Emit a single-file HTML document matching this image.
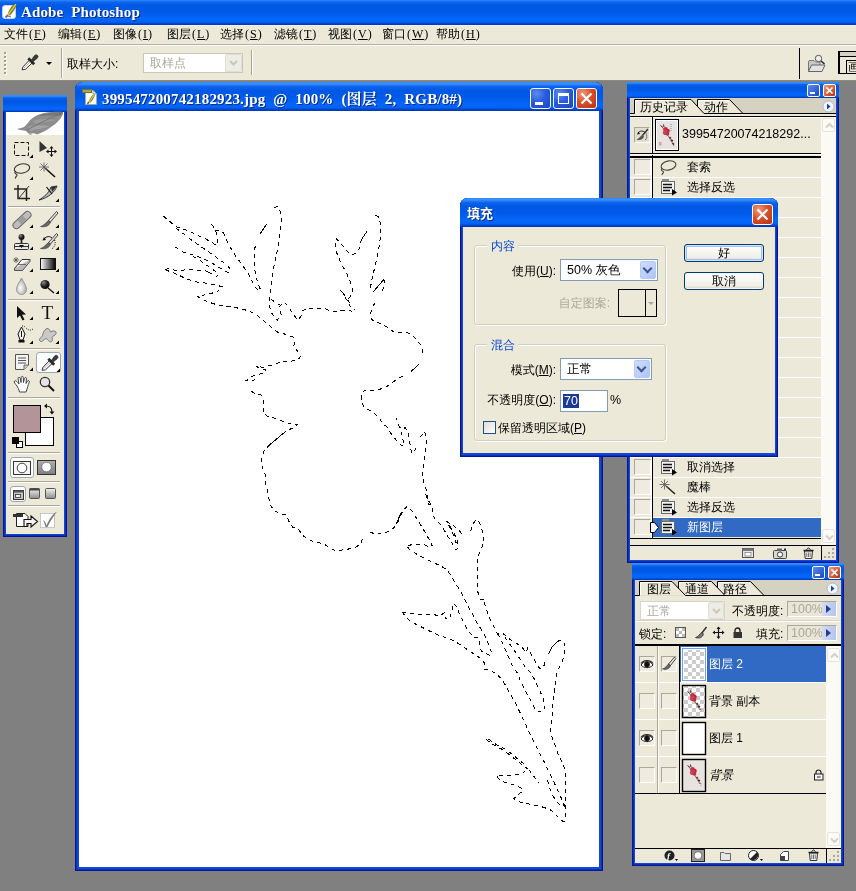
<!DOCTYPE html>
<html lang="zh-CN">
<head>
<meta charset="utf-8">
<title>Adobe Photoshop</title>
<style>
*{box-sizing:border-box;margin:0;padding:0}
html,body{width:856px;height:891px;overflow:hidden;background:#808080}
body{position:relative;will-change:transform;font-family:"Liberation Sans","WenQuanYi Zen Hei","Noto Sans CJK SC",sans-serif;font-size:12px;color:#000;line-height:1}
.abs{position:absolute}
.mono{font-family:"Liberation Mono","WenQuanYi Zen Hei","Noto Sans CJK SC",monospace}
/* app title bar */
#apptitle{left:0;top:0;width:856px;height:25px;background:linear-gradient(#2c88fc 0,#0c64ee 9%,#0058e4 22%,#005ae8 50%,#0466fa 74%,#0462f4 88%,#0040c4 96%,#0034a8 100%)}
#apptitle .t{left:21px;top:5px;color:#fff;font-weight:bold;font-size:15px;letter-spacing:0.13px;word-spacing:4px;font-family:"Liberation Serif","Noto Serif CJK SC",serif;white-space:pre;text-shadow:1px 1px 0 #0a2a8a}
#menubar{left:0;top:25px;width:856px;height:20px;background:#ece9d8;border-top:1px solid #eef1f6;border-bottom:1px solid #b4b1a0}
#menubar span{position:absolute;top:2px;white-space:pre;font-size:12px}
#menubar i{font-style:normal;font-family:"Liberation Serif",serif;letter-spacing:1px;margin-left:1px}
#menubar u{text-decoration:underline}
#optbar{left:0;top:45px;width:856px;height:36px;background:#ece9d8;border-top:1px solid #fff;border-bottom:1px solid #8c8a7c}
/* xp window */
.win{position:absolute;background:#1646d4;box-shadow:inset 0 0 0 1px #06198c, inset 0 0 0 2px #0a2ec0}
.wtitle{position:absolute;left:0;top:0;right:0;background:linear-gradient(#2c88fc 0,#3a90fc 6%,#0c62ec 16%,#0058e4 30%,#005ae8 52%,#0466fa 76%,#0462f4 88%,#0040c4 96%,#0034a8 100%)}
.pbody{position:absolute;background:#ece9d8}
.wt{color:#fff;font-weight:bold;font-size:15px;letter-spacing:0.17px;word-spacing:4px;font-family:"Liberation Serif","Noto Serif CJK SC",serif;white-space:pre;text-shadow:1px 1px 0 #0a2a8a}
.xb{position:absolute;width:21px;height:21px;border:1px solid #fff;border-radius:3px;background:radial-gradient(circle at 30% 25%,#5a8df0 0,#2a5cdc 45%,#1c44c0 100%)}
.xc{background:radial-gradient(circle at 30% 25%,#f09a7a 0,#d9502c 45%,#b8300f 100%)}
.sb{position:absolute;width:13px;height:13px;border:1px solid #fff;border-radius:2px;background:linear-gradient(135deg,#5a8df0,#1c44c0)}
.hrow{position:absolute;left:0;width:191px;height:20px;border-bottom:1px solid #fff}
.hrow span{position:absolute;left:57px;top:3px;font-size:12px;white-space:pre}
.hbox{position:absolute;left:4px;top:1px;width:17px;height:16px;border:1px solid;border-color:#aca899 #fff #fff #aca899;background:#efecdf}
.hsel{border-bottom:0;height:19px}
.hsel::before{content:"";position:absolute;left:23px;top:0;width:168px;height:19px;background:#316ac5}
.hsel span{color:#fff}
.sbtn{width:13px;height:14px;border:1px solid #e6e4d8;border-radius:2px;background:#fcfbf7}
.lrow{position:absolute;left:0;width:191px;height:37px;border-bottom:1px solid #fff}
.lrow span{position:absolute;left:74px;top:12px;font-size:12px;white-space:pre}
.lbox{position:absolute;top:10px;width:16px;height:16px;border:1px solid;border-color:#aca899 #fff #fff #aca899;background:#efecdf}
.lsel::before{content:"";position:absolute;left:45px;top:0;width:146px;height:36px;background:#316ac5}
.lsel span{color:#fff}
.lfield{position:absolute;width:50px;height:16px;border:1px solid;border-color:#aca899 #fff #fff #aca899;background:#e9e6d8}
.lfield span{position:absolute;left:3px;top:1px;font-size:12.500px;color:#aca899}
.lfield b{position:absolute;right:0;top:0;width:14px;height:14px;background:linear-gradient(90deg,#d4dcf4,#b4c4ee)}
.lfield b::after{content:"";position:absolute;left:4px;top:3px;border:4px solid transparent;border-left:5px solid #23408f;border-right:0}
.grp{position:absolute;border:1px solid #d0d0bf;border-radius:3px;box-shadow:inset 1px 1px 0 #fff, 1px 1px 0 #fff}
.glab{position:absolute;background:#ece9d8;color:#0046d5;font-size:12px;padding:0 3px 0 4px;white-space:pre}
.dl{position:absolute;font-size:12px;white-space:pre}
.combo{position:absolute;height:22px;border:1px solid #7f9db9;background:#fff}
.combo span{position:absolute;left:6px;top:4px;font-size:12.500px;white-space:pre}
.combo b{position:absolute;right:1px;top:1px;width:16px;height:18px;border-radius:2px;background:linear-gradient(135deg,#cfdcfb,#b0c4f4);border:1px solid #b4c8f6}
.combo b::after{content:"";position:absolute;left:3px;top:3px;width:5px;height:5px;border:solid #3a5590;border-width:0 2.500px 2.500px 0;transform:rotate(45deg)}
.btn{position:absolute;width:80px;height:18px;border:1px solid #003c74;border-radius:3px;background:linear-gradient(#fff,#f0efe6 80%,#d6d0c5);font-size:12px;text-align:center;line-height:16px;box-shadow:inset 0 0 0 1px #f4f3ee}
.sc{background:linear-gradient(135deg,#f09a7a,#b8300f)}
</style>
</head>
<body>
<!-- app chrome -->
<div id="apptitle" class="abs">
  <svg class="abs" style="left:2px;top:3px" width="16" height="16" viewBox="0 0 16 16">
    <rect x="0.5" y="2.5" width="13" height="13" rx="2.5" fill="#fff" stroke="#c9d3ea"/>
    <path d="M13.5 1 C10 2 7 6 5.5 12 L8 12.5 C10.5 10 13.5 6 14.5 2 Z" fill="#6b8a2e"/>
    <path d="M13.8 1.2 C12 4 9 8 6 12" stroke="#e9c43a" stroke-width="1.3" fill="none"/>
    <path d="M5.5 12 L4 14.5" stroke="#c0392b" stroke-width="1.5"/>
    <path d="M3 14 q3 -2 6 0" stroke="#3a6fd0" stroke-width="1" fill="none"/>
  </svg>
  <div class="abs t">Adobe Photoshop</div>
</div>
<div id="menubar" class="abs">
<span style="left:4px">文件<i>(<u>F</u>)</i></span><span style="left:58px">编辑<i>(<u>E</u>)</i></span><span style="left:113px">图像<i>(<u>I</u>)</i></span><span style="left:167px">图层<i>(<u>L</u>)</i></span><span style="left:220px">选择<i>(<u>S</u>)</i></span><span style="left:274px">滤镜<i>(<u>T</u>)</i></span><span style="left:328px">视图<i>(<u>V</u>)</i></span><span style="left:382px">窗口<i>(<u>W</u>)</i></span><span style="left:436px">帮助<i>(<u>H</u>)</i></span>
</div>
<div id="optbar" class="abs">
  <div class="abs" style="left:5px;top:7px;width:2px;height:24px;background:repeating-linear-gradient(#fff 0 2px,transparent 2px 4px)"></div>
  <div class="abs" style="left:4px;top:6px;width:2px;height:24px;background:repeating-linear-gradient(#a19e8c 0 2px,transparent 2px 4px)"></div>
  <svg class="abs" style="left:20px;top:7px" width="20" height="20" viewBox="0 0 20 20">
    <path d="M2 16.800 L3 13.800 L9.500 7 L12.300 9.800 L5.500 16.300 Z" fill="#fafafa" stroke="#333" stroke-width="1"/>
    <path d="M4 15 L10 9" stroke="#bbb" stroke-width="1"/>
    <path d="M8.300 5.300 L14.200 11.200" stroke="#2a2a2a" stroke-width="2.800"/>
    <path d="M11 7.500 L14.300 2.800 Q16 0.800 17.500 2.300 Q19 3.800 17 5.500 L12.500 9 Z" fill="#3a3a3a" stroke="#222" stroke-width="0.600"/>
  </svg>
  <div class="abs" style="left:46px;top:16px;width:0;height:0;border:3px solid transparent;border-top:3px solid #000;border-bottom:0"></div>
  <div class="abs" style="left:61px;top:2px;width:1px;height:30px;background:#a8a592"></div>
  <div class="abs" style="left:62px;top:2px;width:1px;height:30px;background:#fff"></div>
  <div class="abs" style="left:67px;top:12px;font-size:12px;white-space:pre">取样大小:</div>
  <div class="abs" style="left:143px;top:7px;width:100px;height:20px;border:1px solid #c9c7ba;background:#fff">
    <div class="abs" style="left:6px;top:3px;color:#aca899;font-size:12px">取样点</div>
    <div class="abs" style="right:0;top:0;width:17px;height:18px;background:#eeede5;border:1px solid #e0dfd4;border-radius:2px"></div>
    <svg class="abs" style="right:4px;top:6px" width="9" height="6" viewBox="0 0 9 6"><path d="M1 1 L4.5 4.5 L8 1" stroke="#c9c7ba" stroke-width="2" fill="none"/></svg>
  </div>
  <div class="abs" style="left:251px;top:4px;width:1px;height:25px;background:#a8a592"></div>
  <div class="abs" style="left:252px;top:4px;width:1px;height:25px;background:#fff"></div>
  <div class="abs" style="left:799px;top:2px;width:1px;height:31px;background:#000"></div>
  <svg class="abs" style="left:807px;top:8px" width="20" height="20" viewBox="0 0 20 20">
    <path d="M1.5 17.5 V8 Q1.5 6.5 3 6.5 H7 L8.5 8 H13 V11" fill="#c9c9c9" stroke="#777" stroke-width="1"/>
    <path d="M1.5 17.5 L4.5 11 H18 L15 17.5 Z" fill="#e3e3e3" stroke="#666" stroke-width="1"/>
    <circle cx="11.5" cy="4.5" r="3.2" fill="#eee" stroke="#555" stroke-width="1"/>
    <path d="M14 7 L17.5 10" stroke="#222" stroke-width="1.6"/>
  </svg>
  <div class="abs" style="left:838px;top:5px;width:20px;height:23px;border:solid #000;border-width:1px 0 1px 2px;background:#ece9d8;overflow:hidden">
    <div class="abs" style="left:0;top:0;width:20px;height:4px;background:#d6d2c2"></div>
    <div class="abs" style="left:0;top:4px;width:20px;height:1px;background:#000"></div>
    <div class="abs" style="left:6px;top:8px;width:14px;height:14px;border:1px solid #000;border-bottom:0;border-right:0"></div>
    <div class="abs" style="left:8px;top:9px;font-size:12px">画</div>
  </div>
</div>

<!-- document window -->
<div class="win" id="doc" style="left:75px;top:82px;width:528px;height:789px;border-radius:8px 8px 0 0">
  <div class="wtitle" style="height:29px;border-radius:8px 8px 0 0"></div>
  <svg class="abs" style="left:7px;top:7px" width="16" height="16" viewBox="0 0 16 16">
    <path d="M3.5 1.5 H11 L14.5 5 V15.5 H3.5 Z" fill="#fff" stroke="#9aa"/>
    <path d="M11 1.5 V5 H14.5" fill="#dde" stroke="#9aa"/>
    <rect x="0.5" y="0.5" width="9" height="3" fill="#a7a74a" stroke="#77772a"/>
    <path d="M12 5 C10 6 8 9 6.5 13 L8.5 13.5 C10.5 11.5 12.5 8.5 13 5.5 Z" fill="#6b8a2e"/>
    <path d="M12.3 5.2 C11 7.5 9 10.5 7 13.5" stroke="#e9c43a" stroke-width="1.1" fill="none"/>
    <path d="M6.8 13 L5.5 15" stroke="#c0392b" stroke-width="1.4"/>
  </svg>
  <div class="abs wt" style="left:27px;top:10px">399547200742182923.jpg @ 100% (图层 2, RGB/8#)</div>
  <div class="xb" style="left:455px;top:6px"><div class="abs" style="left:4px;top:13px;width:8px;height:3px;background:#fff"></div></div>
  <div class="xb" style="left:478px;top:6px"><div class="abs" style="left:4px;top:4px;width:11px;height:11px;border:1px solid #fff;border-top-width:3px"></div></div>
  <div class="xb xc" style="left:501px;top:6px"><svg class="abs" style="left:3px;top:3px" width="13" height="13" viewBox="0 0 13 13"><path d="M1.5 1.5 L11.5 11.5 M11.5 1.5 L1.5 11.5" stroke="#fff" stroke-width="2.2"/></svg></div>
  <div class="abs" style="left:4px;top:29px;width:520px;height:756px;background:#fff" id="canvas"></div>
</div>

<!-- ants -->
<svg class="abs" style="left:0;top:0" width="610" height="880" viewBox="0 0 610 880" shape-rendering="crispEdges" fill="none" stroke="#000" stroke-width="1">
<g stroke-dasharray="4 4">
<polyline points="163.4,216.2 171.8,223.2 177.4,227.4 184.4,229.5 191.5,232.3 198.5,235.8 205.5,238.9 212.5,242.9 216.7,245.4 217.4,241.5 216.7,235.1 215.3,229.5 211.4,223.9"/>
<polyline points="215.3,230.2 222.3,231.4 225.1,235.8 227.9,242.9 231.4,249.2 236.3,256.9 241.9,264.6 247.5,272.3 251.7,280.7 255.9,287.7 258.7,291.2 260.1,288.4 257.3,281.4 255.2,273.7 254.5,265.3 254.3,256.9 254.8,248.5 256.2,242.2"/>
<polyline points="176,228.1 181.6,232.3 188.6,237.9 195.7,242.9 202.7,247.8 209.7,252.7 216.7,257.6 223.7,262.5 228.6,266.7 230.7,270.2 227.9,272.6 223.7,270.2 218.1,266.7 211.1,262.5 204.1,259 197.1,256.2 190,254.1 183,252 177.4,248.5 173.2,245.7"/>
<polyline points="192.9,256.2 199.9,260.4 206.9,265.3 213.9,270.2 218.8,274.4 216.7,276.5 211.1,273.7 206.9,270.9"/>
<polyline points="165.5,269.5 169,268.4 174.6,270.2 181.6,270.2 190,269.5 198.5,270.2 205.5,270.9 211.1,273.4"/>
<polyline points="165.5,269.8 171.8,272.3 177.4,274.4 183,277.2 190,280 197.1,282.1 204.1,282.8 211.1,284.2 218.1,285.6 223,287 219.5,290.5 213.9,292.6 206.9,294.7 199.9,295.4 197.1,296.1 201.3,298.9 206.9,301.5 213.9,303.8 217.5,305 227.5,306.25 237.5,308 247.5,310.5 255,313.75 261.25,318.75 267.5,323.75 272.5,328.75 277.5,332 286.25,334.5 293,337 294.5,342.5 293.75,346.25 297.5,351.25 300.5,356.25 297.5,360.5 290,361.25 282.5,361.25 276.25,363.75 270,365.5 263.75,367.5 256.25,366.25 260,368.75 266.25,370 263.75,373 256.25,375 250,377 246.25,380.5 250,381.25 256.25,379.5"/>
<polyline points="274.25,208 277,206.25 280,211.25 281.5,220 280.5,230 278.75,242.5 277,252.5 274.5,263.75 272.5,275 270.75,287.5 269.5,297.5 269.5,305 270.5,311.25 273.75,316.25 277.5,320 281.25,314.5 278.75,307.5 283.75,302 288,306.25 293,313.75 297.5,320 300.75,317 303,310.5 307,308.5 315,308 323.75,308 328.75,310.5 335,312 342.5,310.5 350,310.5 353.75,312.5 355,308.75"/>
<polyline points="271,299 276,303 280,305"/>
<polyline points="348.75,298.75 351.25,295 352.5,290 350,281.25 346.25,272.5 341.25,263.75 337.5,255 335,247.5 336.25,238.75 341.25,243.75 346.25,250 351.25,255.5 356.25,252.5 360,247.5 361.25,240"/>
<polyline points="340.5,290 343.75,295 348.75,303.75 353,311.25"/>
<polyline points="343,293 347,299 352,306"/>
<polyline points="375.5,215.5 378,216.25 380.5,223.75 380.5,235 379.5,245 377.5,255 375,266.25 373,275 371.25,282.5 370.5,288.75 373.75,291.25"/>
<polyline points="383.75,279.5 385,281.25 383.75,287.5 381.25,293"/>
<polyline points="375,303 372,307.5 370.5,313.75 371.25,318.75 375,322 381.25,323.75 387.5,327.5 393.75,332 400,333 406.25,332 412.5,335.5 417.5,340.5 421.25,346.25 422.5,351.25 420.5,357.5"/>
<polyline points="402.5,376 396.25,379.5 391.25,383.75 385,387.5 377.5,390 370,390 364.5,390 362,395.5 361.25,401.25 363.75,406.25 368.75,410 373.75,412.5 378.75,417.5 383,423.75 387.5,427.5 391.25,433.75 396.25,440 401.25,445 403.75,446.25 403,440 401.25,432.5 398.75,425.5 396.25,418"/>
<polyline points="398.75,425.5 402.5,430 405,427.5 408,431.25 409.5,440 410.5,447.5 412,453.75 415,450 416.25,445"/>
<polyline points="420.5,437 424.5,431.25 426.25,437.5 426.25,446.25 425,453.75 423.75,465 422,475 423.75,482.5 426.25,490 427.5,497.5 428.75,504.5 432.5,505.5 433,512.5 434.5,518.75 438.75,522.5 442.5,527 445.5,532.5 450,540 453.75,546.25 456.25,550 458.75,547 457,540 453.75,532.5 450,526.25 446.25,521.25"/>
<polyline points="251.25,391.25 255,393.75 261.25,395 263.5,399 263,405 263,412.5 267.5,416.25 276.25,418.75 282.5,421.25 290,423.75 297.5,424.5 292.5,428 286.25,431.25 282.5,434"/>
<polyline points="270,444.5 263.75,451.25 261.75,458.75 262,466.25 265,473.75 265,482.5 267.5,490 268.75,497.5 270,505 275,511.25 281.25,513.75 286.25,515 288.75,521.25 292.5,527 298.75,530 303.75,536.25 310,540.5 317.5,542.5 323.75,543.75 328.75,547.5 335,550.5 342.5,550 350,548.75 356.25,547 361.25,542.5 362.5,538.75"/>
<polyline points="370,532 376.25,534.5 382.5,533 390,531.25 395.5,526.25 399.5,518.75 402.5,511.25 407,506.25 411.25,510 417.5,520 423.75,530 428.75,538.75 432.5,545.5 428.75,547 423.75,544.5 415,544.5 406.25,545.5 410,550 418.75,555.5 428.75,560.5 438.75,565 447,569.5 451.25,576.25 456.25,584.5 461.25,592.5 465,600 468.75,607.5 473,615 477.5,623.75 482.5,631.25 486.25,638.75 489.5,646.25 492,653.75 490,655.5"/>
<polyline points="425.5,493.75 428,500 432,506.25"/>
<polyline points="446.25,521.25 452.5,525 458.75,530 463.75,536.25"/>
<polyline points="448.75,525 452.5,532.5 455,540 457.5,546.25"/>
<polyline points="470.5,531.25 474.5,521.25 478,520 481.25,526.25 483,535 483,543.75 481.25,550 478,555.5 477,565 477,575 477.5,585 478,592.5 481.25,600 485,599.5 484.5,603.75 487,611.25 490,618.75 493.75,626.25 497.5,633.75 501.25,632.5 505,635 510,639.5 516.25,643 522.5,648 526.25,652.5 527.5,648 530,652.5 533.75,658.75 537,665 540,668.75 544.5,665 545.5,660"/>
<polyline points="557.5,641.25 562.5,640 565,645 564.5,653.75 562,662.5 558.75,668.75 556.25,675 555.5,685 553.75,695 552.5,705 553,715 551.25,721.25 550.5,730 552.5,738.75 556.25,747.5 558.75,756.25 563.75,765 565,772.5 565,785 565,797.5 565.5,810 565,820 563.75,822 560,818.75 555,813.75 550,809.5 542.5,807 535,805.5 527.5,803.75 520,802 513.75,798.75 517.5,795 522.5,791.25 521.25,788 513.75,785 505,782.5 498.75,778.75 496.25,775.5 505,775.5 515,775 522.5,773.75 527.5,768.75 530,771.25 533.75,776.25 538.75,782.5"/>
<polyline points="402.5,612 412.5,613.75 423.75,614.5 433.75,614.5 440,616.25 444.5,612.5 445.5,618.75 450,618.75 452,610 453,603 456.25,606.25 459.5,613.75 463.75,622.5 467.5,630 473.75,637.5 478.75,637.5 479.5,645 481.25,651.25 486.25,653.75 490,655.5"/>
<polyline points="402.5,612 406.25,618 415,623.75 425,628.75 435,633.75 445,637.5 455,641.25 462.5,646.25 470,651.25 477.5,656.25 483,660 485,665 484.5,669.5 490,670 496.25,673.75 501.25,678.75 506.25,686.25 510,693.75 514.5,701.25 518.75,710 523,718.75 527,727.5 531.25,736.25 535.5,745 540,753.75 544.5,762.5 548.75,771.25 553,780 557,788.75 560.5,796.25 563.75,803.75 565,807.5"/>
<polyline points="497.5,633.75 501.25,640 505,648.75 508.75,657.5 512.5,666.25 517,672.5 521.25,682.5 526.25,692.5 531.25,701.25 535,708.75 538,712 543.75,711.25 544.5,705 543,697.5 538.75,688.75 535,680 530,672 523.75,665 517.5,655 511.25,646.25 505,637.5"/>
<polyline points="486.25,739.5 493.75,745 502.5,749.5 510,755 517.5,761.25 523.75,766.25 527.5,768.75"/>
<polyline points="488.5,739 496,744.3 504.7,748.8 512.2,754.3 519.7,760.5 526,765.5"/>
<polyline points="547.5,780 549.5,787.5 552.5,795 556.25,801.25 561.25,806.25 564.5,805"/>
</g>
<g>
<polyline points="260.1,233.7 266.9,223.9"/>
<polyline points="361.25,240 367,231.25"/>
<polyline points="373.75,291.25 378,286.25 383.75,279.5"/>
<polyline points="418.75,364.5 411.25,371.25"/>
<polyline points="282.5,434 270,444.5"/>
<polyline points="548.75,653.75 552.5,646.25 557.5,641.25"/>
<polyline points="396.25,523.75 401.25,512.5"/>
</g>
</svg>
<!-- /ants -->

<!-- toolbox -->
<div class="win" id="toolbox" style="left:3px;top:95px;width:64px;height:442px">
  <div class="wtitle" style="height:17px"></div>
  <div class="abs" style="left:3px;top:17px;width:58px;height:23px;background:#fff"></div>
  <div class="pbody" style="left:3px;top:40px;width:58px;height:399px"></div>
</div>
<svg class="abs" style="left:0;top:0" width="72" height="540" viewBox="0 0 72 540">
  <defs>
    <linearGradient id="gh" x1="0" x2="1" y1="0" y2="0"><stop offset="0" stop-color="#fff"/><stop offset="1" stop-color="#000"/></linearGradient>
    <linearGradient id="gv" x1="0" x2="0" y1="0" y2="1"><stop offset="0" stop-color="#f4f4f4"/><stop offset="1" stop-color="#8a8a8a"/></linearGradient>
    <radialGradient id="gb" cx="0.35" cy="0.3" r="0.8"><stop offset="0" stop-color="#888"/><stop offset="0.5" stop-color="#222"/><stop offset="1" stop-color="#000"/></radialGradient>
    <radialGradient id="gd" cx="0.4" cy="0.6" r="0.7"><stop offset="0" stop-color="#fff"/><stop offset="1" stop-color="#9a9a9a"/></radialGradient>
  </defs>
  <!-- feather -->
  <g>
    <path d="M63 112 C54 111.500 42 112 34 117 C29 120 27 125 24 127 C21 128.500 19 128 17 129 C20 130.500 23 130 26 131 L30 135 L33 133 L37 134.500 C42 133 47 130 51 127 C56 124 61 119 63 114 Z" fill="#8d8d8d"/>
    <path d="M63 112 C55 112 45 113 38 116 C44 116 52 115 60 116 Z" fill="#777"/>
    <path d="M33 121 C38 119 46 118 55 120 C50 122 42 122 36 124 Z" fill="#9c9c9c"/>
    <path d="M28 127 C33 125 42 125 50 126 C44 129 36 129 30 131 Z" fill="#a2a2a2"/>
    <path d="M29 133 L31 135 L33 133 Z" fill="#b5b5b5"/>
    <path d="M62 113 C52 117 40 123 27 130" stroke="#6c6c6c" stroke-width="0.8" fill="none"/>
  </g>
  
  <rect x="8" y="206" width="52" height="1" fill="#aca899"/><rect x="8" y="207" width="52" height="1" fill="#fff"/><rect x="8" y="299" width="52" height="1" fill="#aca899"/><rect x="8" y="300" width="52" height="1" fill="#fff"/><rect x="8" y="348" width="52" height="1" fill="#aca899"/><rect x="8" y="349" width="52" height="1" fill="#fff"/><rect x="8" y="397" width="52" height="1" fill="#aca899"/><rect x="8" y="398" width="52" height="1" fill="#fff"/><rect x="8" y="452" width="52" height="1" fill="#aca899"/><rect x="8" y="453" width="52" height="1" fill="#fff"/><rect x="8" y="481" width="52" height="1" fill="#aca899"/><rect x="8" y="482" width="52" height="1" fill="#fff"/><rect x="8" y="505" width="52" height="1" fill="#aca899"/><rect x="8" y="506" width="52" height="1" fill="#fff"/>
  <!-- marquee -->
  <rect x="14.5" y="142.5" width="14" height="13" fill="none" stroke="#111" stroke-width="1" stroke-dasharray="4 2"/>
  <path d="M33 158 h-3.5 l3.5 -3.5 z" fill="#000"/>
  <!-- move -->
  <path d="M39.5 141 V152 L47 148 Z" fill="#333"/>
  <path d="M51.5 147 v9 M47 151.5 h9" stroke="#111" stroke-width="1"/>
  <path d="M51.5 146 l-2 2.5 h4 z M51.5 157 l-2 -2.5 h4 z M46 151.5 l2.5 -2 v4 z M57 151.5 l-2.5 -2 v4 z" fill="#111"/>
  <!-- lasso -->
  <ellipse cx="22" cy="168.5" rx="7.8" ry="4.6" fill="none" stroke="#333" stroke-width="1.1" transform="rotate(-12 22 168.5)"/>
  <path d="M15.5 171 q-1.5 2 0.5 3 q2 1 0 2.5 l-0.7 2" fill="none" stroke="#333" stroke-width="1.1"/>
  <path d="M33 180 h-3.5 l3.5 -3.5 z" fill="#000"/>
  <!-- wand -->
  <path d="M45 168 L55 177" stroke="#111" stroke-width="1.6"/>
  <path d="M44 162.5 v9 M39 167 h10 M40.5 163.5 l7 7 M47.5 163.5 l-7 7" stroke="#555" stroke-width="0.8"/>
  <!-- crop -->
  <path d="M18 185 V198.5 H30 M14 189 H26.5 V201" fill="none" stroke="#222" stroke-width="1.5"/>
  <path d="M19 198 L29 186" stroke="#222" stroke-width="0.9"/>
  <!-- slice -->
  <path d="M39 200 C44 197 49 193 51 187 L57 186 C55 192 48 198 39 200 Z" fill="#bbb" stroke="#222" stroke-width="0.9"/>
  <path d="M51 187 L57 186 L52 192 Z" fill="#333"/>
  <path d="M46.5 187 L52 194" stroke="#111" stroke-width="1.2"/>
  <path d="M59 202 h-3.5 l3.5 -3.5 z" fill="#000"/>
  <!-- healing -->
  <rect x="11" y="216.5" width="22" height="7" rx="3.5" fill="#bdbdbd" stroke="#666" stroke-width="1" transform="rotate(-43 22 220)"/>
  <rect x="18.5" y="217" width="7" height="6" fill="#9c9c9c" transform="rotate(-43 22 220)"/>
  <path d="M33 228 h-3.5 l3.5 -3.5 z" fill="#000"/>
  <!-- brush -->
  <path d="M56.5 211.5 L58 213 L50.5 222 L48.5 220.5 Z" fill="#ddd" stroke="#222" stroke-width="0.8"/>
  <path d="M48.5 220.5 L50.5 222.5 C49 226 45 227.5 40.5 226.5 C44 225.5 45.5 223 48.5 220.5 Z" fill="#666" stroke="#222" stroke-width="0.5"/>
  <path d="M59 228 h-3.5 l3.500 -3.500 z" fill="#000"/>
  <!-- stamp -->
  <circle cx="21.5" cy="237" r="3" fill="url(#gb)"/>
  <path d="M21.5 240 V244" stroke="#222" stroke-width="1.8"/>
  <rect x="14.5" y="243.5" width="14" height="6" rx="1" fill="#e8e8e8" stroke="#333" stroke-width="1"/>
  <path d="M15 246.5 H28" stroke="#333" stroke-width="1"/>
  <path d="M19 245 h5 l-2.5 3 z" fill="#111"/>
  <path d="M33 250 h-3.5 l3.5 -3.5 z" fill="#000"/>
  <!-- history brush -->
  <path d="M56.5 233.5 L58 235 L50.5 244 L48.5 242.5 Z" fill="#ddd" stroke="#222" stroke-width="0.8"/>
  <path d="M48.5 242.5 L50.5 244.5 C49 248 45 249.500 40.5 248.5 C44 247.5 45.5 245 48.5 242.5 Z" fill="#666" stroke="#222" stroke-width="0.5"/>
  <path d="M44 239 C46.5 236 50 236 52 238" fill="none" stroke="#111" stroke-width="1"/>
  <path d="M42.5 240.5 l3.5 -0.5 l-2 -3 z" fill="#111"/>
  <path d="M54.5 240 C56 243 55 247 51.500 249" fill="none" stroke="#111" stroke-width="1" stroke-dasharray="1 1.2"/>
  <path d="M59 250 h-3.5 l3.5 -3.5 z" fill="#000"/>
  <!-- eraser -->
  <path d="M14.5 268.5 L22 259.5 H30 L22.5 268.5 Z" fill="#f6f6f6" stroke="#333" stroke-width="1"/>
  <path d="M14.5 268.5 V270.5 H22.5 L30 261.5 V259.5" fill="#bbb" stroke="#333" stroke-width="0.8"/>
  <path d="M18 264.5 H26" stroke="#555" stroke-width="0.8"/>
  <path d="M16 257 v6 M13 260 h6 M14 258 l4 4 M18 258 l-4 4" stroke="#444" stroke-width="0.7"/>
  <path d="M33 272 h-3.5 l3.5 -3.5 z" fill="#000"/>
  <!-- gradient -->
  <rect x="40.500" y="258.5" width="15" height="11" fill="url(#gh)" stroke="#111" stroke-width="1"/>
  <path d="M59 272 h-3.5 l3.5 -3.5 z" fill="#000"/>
  <!-- blur -->
  <path d="M21.500 278 C19 283 16.500 286 16.500 289.500 A5 5 0 0 0 26.500 289.500 C26.500 286 24 283 21.500 278 Z" fill="url(#gd)" stroke="#888" stroke-width="0.8"/>
  <path d="M33 294 h-3.5 l3.5 -3.5 z" fill="#000"/>
  <!-- dodge -->
  <circle cx="45" cy="284.500" r="4.600" fill="url(#gb)"/>
  <path d="M48 288 L54 293" stroke="#111" stroke-width="1.3"/>
  <path d="M59 294 h-3.5 l3.5 -3.5 z" fill="#000"/>
  <!-- path select arrow -->
  <path d="M17 306 V318 L20 315.500 L22.500 320.500 L24.500 319.500 L22 314.700 L26 314.500 Z" fill="#111"/>
  <path d="M33 320 h-3.5 l3.5 -3.5 z" fill="#000"/>
  <!-- T -->
  <text x="41.500" y="319" font-family="Liberation Serif,serif" font-size="19" fill="#111">T</text>
  <path d="M59 320 h-3.5 l3.5 -3.5 z" fill="#000"/>
  <!-- pen -->
  <path d="M21.500 327 L18 334 L20 340 H23 L25 334 Z" fill="#f2f2f2" stroke="#111" stroke-width="1"/>
  <path d="M21.500 331 V337" stroke="#111" stroke-width="1"/>
  <rect x="18.500" y="340" width="6" height="2.500" fill="#111"/>
  <path d="M22 326 C26 325 27 333 33 329" fill="none" stroke="#111" stroke-width="0.9" stroke-dasharray="1 1.300"/>
  <path d="M33 344 h-3.5 l3.5 -3.5 z" fill="#000"/>
  <!-- shape -->
  <path d="M46 329 C49 327 50 331 50.500 332 C53 330 57 331 56 333.500 C55 336 52 336 52 337.500 C53 340 52 343 49.500 341.500 C48 340.500 47 338.500 46 338.500 C44 339 42 343 40 341 C38 339 42 337 42.500 335.500 C43 333 44 330.500 46 329 Z" fill="#c9c9c9" stroke="#777" stroke-width="1"/>
  <path d="M59 344 h-3.5 l3.5 -3.5 z" fill="#000"/>
  <!-- notes -->
  <path d="M15.500 354.500 H28.500 V365 L24 369.500 H15.500 Z" fill="#f4f4f4" stroke="#555" stroke-width="1"/>
  <path d="M28.500 365 H24 V369.500" fill="#ccc" stroke="#555" stroke-width="0.800"/>
  <path d="M18 358 H26 M18 360.500 H26 M18 363 H26" stroke="#444" stroke-width="0.900"/>
  <path d="M33 371 h-3.5 l3.5 -3.5 z" fill="#000"/>
  <!-- eyedropper selected -->
  <rect x="36.5" y="352.5" width="24" height="20" rx="2.5" fill="#fff" stroke="#98a9b8" stroke-width="1"/>
  <g transform="translate(40,353.5)">
    <path d="M2 16.8 L3 13.8 L9.5 7 L12.3 9.8 L5.5 16.3 Z" fill="#fafafa" stroke="#333" stroke-width="1"/>
    <path d="M4 15 L10 9" stroke="#bbb" stroke-width="1"/>
    <path d="M8.3 5.3 L14.2 11.2" stroke="#2a2a2a" stroke-width="2.8"/>
    <path d="M11 7.5 L14.3 2.800 Q16 0.8 17.5 2.3 Q19 3.8 17 5.5 L12.5 9 Z" fill="#3a3a3a" stroke="#222" stroke-width="0.6"/>
  </g>
  <path d="M60 372 h-3.5 l3.5 -3.5 z" fill="#000"/>
  <!-- hand -->
  <path d="M17 386 C15 383.500 13.500 382 14.500 381 C16 380 17.500 382.500 19 384 L18 378.500 C18 377 20 377 20.300 378.500 L21 382.500 L21.200 377.500 C21.300 376 23.300 376 23.300 377.500 L23.500 382.500 L24.500 378.300 C25 377 26.800 377.300 26.500 378.800 L26 383.500 L27.500 381 C28.300 380 29.800 380.800 29.300 382 C28 385 27.500 388 26 392 H19.500 C19 389.500 18 388 17 386 Z" fill="#fff" stroke="#333" stroke-width="0.900"/>
  <!-- zoom -->
  <circle cx="45" cy="382" r="4.700" fill="#e4e4e4" stroke="#333" stroke-width="1.300"/>
  <path d="M48.500 385.500 L54 391" stroke="#111" stroke-width="2"/>
  <!-- colors -->
  <rect x="25.500" y="417.500" width="28" height="28" fill="#fff" stroke="#000"/>
  <rect x="13.500" y="405.500" width="27" height="27" fill="#b39498" stroke="#000"/>
  <rect x="14.500" y="406.500" width="25" height="25" fill="none" stroke="#fff" stroke-width="0"/>
  <rect x="16.500" y="441.500" width="6" height="6" fill="#fff" stroke="#000" stroke-width="1"/>
  <rect x="12" y="437" width="7" height="7" fill="#000"/>
  <path d="M46 406 C50 406 52 408 52 412" fill="none" stroke="#111" stroke-width="1.200"/>
  <path d="M44 406 l3 -2.500 v5 z M52 414.500 l-2.500 -3 h5 z" fill="#111"/>
  <!-- quick mask -->
  <rect x="10.500" y="457.500" width="23" height="20" rx="2.500" fill="#fff" stroke="#98a9b8"/>
  <rect x="13.500" y="461.500" width="17" height="13" fill="#f6f6f6" stroke="#333"/>
  <circle cx="22" cy="468" r="4.800" fill="#fff" stroke="#333" stroke-width="0.900"/>
  <rect x="37.500" y="460.500" width="18" height="14" fill="url(#gv)" stroke="#333"/>
  <rect x="38" y="461" width="17" height="13" fill="#777" opacity="0.550"/>
  <circle cx="46.500" cy="467" r="4.800" fill="#fff" stroke="#555" stroke-width="0.600"/>
  <!-- screen modes -->
  <rect x="10.500" y="486.500" width="15" height="15" rx="2.500" fill="#fff" stroke="#98a9b8"/>
  <rect x="13.500" y="490.500" width="10" height="9" fill="#c4c4c4" stroke="#333"/>
  <rect x="13.500" y="490.500" width="10" height="2" fill="#555"/>
  <rect x="15.500" y="494.500" width="5" height="3" fill="#eee" stroke="#333" stroke-width="0.800"/>
  <rect x="29.500" y="488.500" width="10" height="10" rx="1" fill="url(#gv)" stroke="#555"/>
  <rect x="29.500" y="488.500" width="10" height="2" fill="#444"/>
  <rect x="45.500" y="488.500" width="10" height="10" rx="1" fill="url(#gv)" stroke="#555"/>
  <!-- imageready -->
  <path d="M16.500 513.500 H25 L28 516.500 V526.500 H16.500 Z" fill="#fff" stroke="#222"/>
  <rect x="13" y="514" width="10" height="3" fill="#333"/>
  <path d="M24 519.500 H31 V516 L37.500 521.500 L31 527 V523.500 H27 V526.500 H24 Z" fill="#f2f2f2" stroke="#111" stroke-width="1.100"/>
  <rect x="40.500" y="513.500" width="14" height="14" fill="#fff" stroke="#bbb" stroke-width="0.800"/>
  <path d="M43 520 C45 521 46 523 46.500 525.500 C49 519 53 514 57 511.500 C54 516 50 521 47.500 527 H45.500 C45 524 44 522 43 520 Z" fill="#7a7a7a"/>
</svg>

<!-- history panel -->
<div class="win" id="hist" style="left:627px;top:82px;width:212px;height:481px">
  <div class="wtitle" style="height:16px"></div>
  <div class="sb" style="left:180px;top:2px"><div class="abs" style="left:2px;top:7px;width:5px;height:2px;background:#fff"></div></div>
  <div class="sb sc" style="left:196px;top:2px"><svg class="abs" style="left:1px;top:1px" width="9" height="9" viewBox="0 0 9 9"><path d="M1.5 1.5 L7.5 7.5 M7.5 1.5 L1.5 7.5" stroke="#fff" stroke-width="1.7"/></svg></div>
  <div class="pbody" style="left:3px;top:16px;width:206px;height:462px;overflow:hidden">
    <!-- tab strip: pbody origin = page (630,98) -->
    <div class="abs" style="left:0;top:0;width:206px;height:15px;background:#d6d2c2"></div>
    <svg class="abs" style="left:0;top:0" width="206" height="20" viewBox="0 0 206 20">
      <path d="M4.5 15.5 V1.5 H61 L74 15.5 Z" fill="#ece9d8"/>
      <path d="M67.5 1.5 H99.5 L113 15.5 H74 L67.5 8.500 Z" fill="#ece9d8"/>
      <path d="M0 15.500 H4.5 V1.5 H61 L74 15.5 H206" fill="none" stroke="#000" stroke-width="1"/>
      <path d="M67.5 8.5 V1.5 H99.5 L113 15.5" fill="none" stroke="#000" stroke-width="1"/>
      <path d="M5.5 15 V2.5 H60" fill="none" stroke="#fff" stroke-width="1"/>
      <path d="M68.500 8 V2.500 H99" fill="none" stroke="#fff" stroke-width="1"/>
      <path d="M0 18.5 H206" stroke="#000" stroke-width="1"/>
      <path d="M0 19.5 H191" stroke="#fff" stroke-width="1"/>
      <circle cx="198.5" cy="8.5" r="5.5" fill="#f4f6fb" stroke="#aab6d6" stroke-width="1"/>
      <path d="M197 5.5 L200.5 8.5 L197 11.5 Z" fill="#1c3fa8"/>
    </svg>
    <div class="abs" style="left:10px;top:3px;font-size:12px;white-space:pre">历史记录</div>
    <div class="abs" style="left:74px;top:3px;font-size:12px;white-space:pre">动作</div>
    <!-- snapshot row -->
    <div class="abs" style="left:4px;top:29px;width:16px;height:16px;border:1px solid;border-color:#aca899 #fff #fff #aca899;background:#e1ded0"></div>
    <div class="abs" style="left:25px;top:21px;width:24px;height:32px;border:1px solid #000;background:#fff;padding:1px">
      <svg width="20" height="28" viewBox="0 0 20 28" style="display:block"><rect width="20" height="28" fill="#e6e3e0"/><path d="M3.500 4.500 l2.500 2 M6.500 3.500 l0.500 2.500" stroke="#3a2222" stroke-width="1"/><circle cx="8.500" cy="8.500" r="2.400" fill="#d62a44"/><circle cx="10.500" cy="10" r="2.300" fill="#c4203a"/><circle cx="8.500" cy="11.500" r="2.600" fill="#dc3c56"/><circle cx="10.500" cy="13" r="1.800" fill="#c8283c"/><path d="M5 6 C8 10 12 16 17 25" stroke="#7a5a58" stroke-width="0.800" fill="none"/><path d="M12.500 16 l1.500 1.500 M14 19 l2 1 M15.500 22 l1.500 1.500" stroke="#5a2028" stroke-width="1.400"/><path d="M14 3 v7" stroke="#777" stroke-width="0.800" stroke-dasharray="1 1"/><rect x="2" y="21" width="2.500" height="3.500" fill="#d9a0a0"/></svg>
    </div>
    <div class="abs" style="left:52px;top:30px;font-size:12.5px;white-space:pre">39954720074218292...</div>
    <!-- rows -->
    <div class="hrow" style="top:60px"><div class="hbox"></div><span>套索</span></div>
<div class="hrow" style="top:80px"><div class="hbox"></div><span>选择反选</span></div>
<div class="hrow" style="top:100px"><div class="hbox"></div></div>
<div class="hrow" style="top:120px"><div class="hbox"></div></div>
<div class="hrow" style="top:140px"><div class="hbox"></div></div>
<div class="hrow" style="top:160px"><div class="hbox"></div></div>
<div class="hrow" style="top:180px"><div class="hbox"></div></div>
<div class="hrow" style="top:200px"><div class="hbox"></div></div>
<div class="hrow" style="top:220px"><div class="hbox"></div></div>
<div class="hrow" style="top:240px"><div class="hbox"></div></div>
<div class="hrow" style="top:260px"><div class="hbox"></div></div>
<div class="hrow" style="top:280px"><div class="hbox"></div></div>
<div class="hrow" style="top:300px"><div class="hbox"></div></div>
<div class="hrow" style="top:320px"><div class="hbox"></div></div>
<div class="hrow" style="top:340px"><div class="hbox"></div></div>
<div class="hrow" style="top:360px"><div class="hbox"></div><span>取消选择</span></div>
<div class="hrow" style="top:380px"><div class="hbox"></div><span>魔棒</span></div>
<div class="hrow" style="top:400px"><div class="hbox"></div><span>选择反选</span></div>
<div class="hrow hsel" style="top:420px"><div class="hbox"></div><span>新图层</span></div>

    <div class="abs" style="left:21px;top:19px;width:1px;height:421px;background:#fff"></div>
    <div class="abs" style="left:22px;top:19px;width:1px;height:421px;background:#000"></div>
    <div class="abs" style="left:0;top:55px;width:191px;height:1px;background:#000"></div>
    <div class="abs" style="left:0;top:56px;width:191px;height:1px;background:#fff"></div>
    <div class="abs" style="left:0;top:58px;width:191px;height:2px;background:#000"></div>
    <div class="abs" style="left:0;top:440px;width:191px;height:1px;background:#000"></div>
    <!-- scrollbar -->
    <div class="abs" style="left:191px;top:19px;width:15px;height:428px;background:#fbfaf5"></div>
    <div class="abs sbtn" style="left:192px;top:20px"><svg width="13" height="14" viewBox="0 0 13 14" style="display:block"><path d="M3 8.5 L6.5 5 L10 8.5" stroke="#d4d1c3" stroke-width="2" fill="none"/></svg></div>
    <div class="abs sbtn" style="left:192px;top:431px"><svg width="13" height="14" viewBox="0 0 13 14" style="display:block"><path d="M3 5.5 L6.5 9 L10 5.5" stroke="#d4d1c3" stroke-width="2" fill="none"/></svg></div>
    <!-- bottom bar -->
    <div class="abs" style="left:0;top:447px;width:206px;height:1px;background:#000"></div>
    <div class="abs" style="left:191px;top:448px;width:1px;height:14px;background:#000"></div>
  </div>
</div>
<svg class="abs" style="left:0;top:0;pointer-events:none" width="856" height="570" viewBox="0 0 856 570">
  <g transform="translate(660,160)"><ellipse cx="8.5" cy="5.5" rx="7.5" ry="4.5" fill="none" stroke="#444" stroke-width="1.1" transform="rotate(-12 8.5 5.5)"/><path d="M2 8 q-1.5 2 0.5 3 q2 1 0 2.5 l-0.7 1.5" fill="none" stroke="#444" stroke-width="1.1"/></g><g transform="translate(661,179)"><rect x="1" y="0" width="7" height="3" fill="#8c8c8c"/><rect x="0.5" y="2.5" width="13" height="12" fill="#f4f4f4" stroke="#6a6a6a"/><path d="M2 5.5 H11 M2 8.5 H11 M2 11.5 H9" stroke="#111" stroke-width="1.4"/><path d="M11 10 L16 13.5 L11 16.5 Z" fill="#000"/></g><g transform="translate(661,459)"><rect x="1" y="0" width="7" height="3" fill="#8c8c8c"/><rect x="0.5" y="2.5" width="13" height="12" fill="#f4f4f4" stroke="#6a6a6a"/><path d="M2 5.5 H11 M2 8.5 H11 M2 11.5 H9" stroke="#111" stroke-width="1.4"/><path d="M11 10 L16 13.5 L11 16.5 Z" fill="#000"/></g><g transform="translate(659,479)"><path d="M7 7 L16 15" stroke="#222" stroke-width="1.5"/><path d="M5.5 0.5 v10 M0.5 5.5 h10 M2 2 l7 7 M9 2 l-7 7" stroke="#555" stroke-width="0.8"/></g><g transform="translate(661,499)"><rect x="1" y="0" width="7" height="3" fill="#8c8c8c"/><rect x="0.5" y="2.5" width="13" height="12" fill="#f4f4f4" stroke="#6a6a6a"/><path d="M2 5.5 H11 M2 8.5 H11 M2 11.5 H9" stroke="#111" stroke-width="1.4"/><path d="M11 10 L16 13.5 L11 16.5 Z" fill="#000"/></g><g transform="translate(661,519)"><rect x="1" y="0" width="7" height="3" fill="#8c8c8c"/><rect x="0.5" y="2.5" width="13" height="12" fill="#f4f4f4" stroke="#6a6a6a"/><path d="M2 5.5 H11 M2 8.5 H11 M2 11.5 H9" stroke="#111" stroke-width="1.4"/><path d="M11 10 L16 13.5 L11 16.5 Z" fill="#000"/></g>
  <!-- history brush small -->
  <g transform="translate(635,128)"><path d="M13 1 L7 8" stroke="#333" stroke-width="1.5"/><path d="M7.5 7 C5 8 4.5 10.5 1.5 11.5 C5 13 8 11.5 9 8.5 Z" fill="#555"/><path d="M3 5 C5 2.5 8 2.5 10 4.5" fill="none" stroke="#111" stroke-width="0.9"/><path d="M2 6.5 l3 -0.5 l-1.5 -2.5 z" fill="#111"/><path d="M11 5.5 C12.5 8 12 11 9.5 12.5" fill="none" stroke="#111" stroke-width="0.9" stroke-dasharray="1 1"/></g>
  <!-- state marker -->
  <path d="M650.5 522.5 H654.5 L658.5 527.5 L654.5 532.5 H650.5 Z" fill="#fff" stroke="#000" stroke-width="1"/>
  <!-- bottom icons -->
  <g transform="translate(742,548)"><rect x="0.5" y="0.5" width="11" height="9" fill="#e8e8e8" stroke="#555"/><rect x="0.5" y="0.5" width="11" height="2.5" fill="#777"/><rect x="3" y="4.5" width="6" height="3.5" fill="#fff" stroke="#777" stroke-width="0.7"/></g>
  <g transform="translate(773,548)"><rect x="0.5" y="2.5" width="13" height="8" rx="1" fill="#d8d8d8" stroke="#444"/><rect x="4" y="0.5" width="5" height="2.5" fill="#666"/><circle cx="7" cy="6.5" r="2.6" fill="#fff" stroke="#333"/><rect x="11" y="0.5" width="2" height="2" fill="#333"/></g>
  <g transform="translate(803,547)"><path d="M1.5 4 H9.5 L8.8 11.5 H2.2 Z" fill="#f2f2f2" stroke="#333"/><path d="M0.5 3.5 H10.5" stroke="#222" stroke-width="1.5"/><path d="M3.5 2.5 Q5.5 -0.5 7.5 2.5" stroke="#222" fill="none"/><path d="M3.8 5.5 V10 M5.5 5.5 V10 M7.2 5.5 V10" stroke="#555" stroke-width="0.8"/></g>
  <g fill="#aca899"><rect x="832" y="556" width="2" height="2"/><rect x="828" y="556" width="2" height="2"/><rect x="832" y="552" width="2" height="2"/><rect x="824" y="556" width="2" height="2"/><rect x="828" y="552" width="2" height="2"/><rect x="832" y="548" width="2" height="2"/></g>
</svg>

<!-- layers panel -->
<div class="win" id="layers" style="left:632px;top:563px;width:212px;height:303px">
  <div class="wtitle" style="height:17px"></div>
  <div class="sb" style="left:180px;top:3px"><div class="abs" style="left:2px;top:7px;width:5px;height:2px;background:#fff"></div></div>
  <div class="sb sc" style="left:196px;top:3px"><svg class="abs" style="left:1px;top:1px" width="9" height="9" viewBox="0 0 9 9"><path d="M1.5 1.5 L7.5 7.5 M7.5 1.5 L1.5 7.5" stroke="#fff" stroke-width="1.7"/></svg></div>
  <div class="pbody" style="left:3px;top:17px;width:206px;height:283px;overflow:hidden">
  <div class="abs" style="left:0;top:-1px;width:206px;height:284px">
    <div class="abs" style="left:0;top:1px;width:206px;height:16px;background:#d6d2c2"></div>
    <svg class="abs" style="left:0;top:0" width="206" height="18" viewBox="0 0 206 18">
      <path d="M4.5 16.5 V2.5 H37 L50.500 16.5 Z" fill="#ece9d8"/>
      <path d="M43.5 2.5 H76.5 L90 16.5 H50.5 L43.5 9.5 Z" fill="#ece9d8"/>
      <path d="M82.5 2.5 H115.5 L129 16.5 H90 L82.5 9 Z" fill="#ece9d8"/>
      <path d="M0 16.5 H4.5 V2.5 H37 L50.5 16.5 H206" fill="none" stroke="#000" stroke-width="1"/>
      <path d="M43.5 9.5 V2.5 H76.5 L90 16.5" fill="none" stroke="#000" stroke-width="1"/>
      <path d="M82.5 9 V2.5 H115.5 L129 16.5" fill="none" stroke="#000" stroke-width="1"/>
      <path d="M5.5 16 V3.5 H36" fill="none" stroke="#fff" stroke-width="1"/>
      <path d="M44.5 9 V3.5 H76" fill="none" stroke="#fff" stroke-width="1"/>
      <path d="M83.5 9 V3.5 H115" fill="none" stroke="#fff" stroke-width="1"/>
      <rect x="0" y="17" width="206" height="1" fill="#ece9d8"/>
      <circle cx="197.5" cy="9.5" r="5.5" fill="#f4f6fb" stroke="#aab6d6" stroke-width="1"/>
      <path d="M196 6.5 L199.5 9.5 L196 12.5 Z" fill="#1c3fa8"/>
    </svg>
    <div class="abs" style="left:12px;top:4px;font-size:12px;white-space:pre">图层</div>
    <div class="abs" style="left:50px;top:4px;font-size:12px;white-space:pre">通道</div>
    <div class="abs" style="left:88px;top:4px;font-size:12px;white-space:pre">路径</div>
    <!-- blend row -->
    <div class="abs" style="left:5px;top:22px;width:85px;height:19px;border:1px solid #d8d5c6;background:#fff">
      <div class="abs" style="left:6px;top:3px;color:#aca899;font-size:12px">正常</div>
      <div class="abs" style="right:0;top:0;width:16px;height:17px;background:#eeede5;border:1px solid #e0dfd4;border-radius:2px"></div>
      <svg class="abs" style="right:3px;top:6px" width="9" height="6" viewBox="0 0 9 6"><path d="M1 1 L4.500 4.500 L8 1" stroke="#c9c7ba" stroke-width="2" fill="none"/></svg>
    </div>
    <div class="abs" style="left:97px;top:26px;font-size:12px;white-space:pre">不透明度:</div>
    <div class="lfield" style="left:152px;top:22px"><span>100%</span><b></b></div>
    <div class="abs" style="left:0;top:41px;width:206px;height:1px;background:#d8d5c6"></div>
    <div class="abs" style="left:0;top:42px;width:206px;height:1px;background:#fff"></div>
    <div class="abs" style="left:4px;top:49px;font-size:12px;white-space:pre">锁定:</div>
    <div class="abs" style="left:121px;top:49px;font-size:12px;white-space:pre">填充:</div>
    <div class="lfield" style="left:152px;top:46px"><span>100%</span><b></b></div>
    <div class="abs" style="left:0;top:65px;width:206px;height:2px;background:#000"></div>
    <div class="lrow lsel" style="top:67px"><div class="lbox" style="left:4px"></div><div class="lbox" style="left:26px"></div><span>图层 2</span></div>
<div class="lrow" style="top:104px"><div class="lbox" style="left:4px"></div><div class="lbox" style="left:26px"></div><span>背景 副本</span></div>
<div class="lrow" style="top:141px"><div class="lbox" style="left:4px"></div><div class="lbox" style="left:26px"></div><span>图层 1</span></div>
<div class="lrow" style="top:178px"><div class="lbox" style="left:4px"></div><div class="lbox" style="left:26px"></div><span style="font-style:italic">背景</span></div>

    <div class="abs" style="left:22px;top:67px;width:1px;height:148px;background:#aca899"></div>
    <div class="abs" style="left:23px;top:67px;width:1px;height:148px;background:#fff"></div>
    <div class="abs" style="left:44px;top:67px;width:1px;height:148px;background:#000"></div>
    <div class="abs" style="left:0;top:214px;width:191px;height:1px;background:#000"></div>
    <!-- scrollbar -->
    <div class="abs" style="left:191px;top:67px;width:15px;height:202px;background:#fbfaf5"></div>
    <div class="abs sbtn" style="left:192px;top:69px"><svg width="13" height="14" viewBox="0 0 13 14"><path d="M3 8.500 L6.500 5 L10 8.500" stroke="#d4d1c3" stroke-width="2" fill="none"/></svg></div>
    <div class="abs sbtn" style="left:192px;top:253px"><svg width="13" height="14" viewBox="0 0 13 14"><path d="M3 5.500 L6.500 9 L10 5.500" stroke="#d4d1c3" stroke-width="2" fill="none"/></svg></div>
    <div class="abs" style="left:0;top:269px;width:206px;height:1px;background:#000"></div>
    <div class="abs" style="left:191px;top:270px;width:1px;height:14px;background:#000"></div>
  </div>
  </div>
</div>
<svg class="abs" style="left:0;top:0;pointer-events:none" width="856" height="891" viewBox="0 0 856 891">
  <defs><pattern id="chk" width="8" height="8" patternUnits="userSpaceOnUse"><rect width="8" height="8" fill="#fff"/><rect width="4" height="4" fill="#ccc"/><rect x="4" y="4" width="4" height="4" fill="#ccc"/></pattern></defs>
  <g transform="translate(640,659)"><path d="M1 6 C4 1.500 10 1.500 13 6 C10 9.500 4 9.500 1 6 Z" fill="#fff" stroke="#222" stroke-width="1"/><circle cx="7" cy="5.500" r="2.800" fill="#111"/><path d="M1 4.500 C4 0.500 10 0.500 13 4.500" fill="none" stroke="#222" stroke-width="1.200"/></g><rect x="681" y="647" width="26" height="35" fill="#fff"/><rect x="682.5" y="648.5" width="23" height="32" fill="none" stroke="#7a9fe0" stroke-width="1"/><rect x="684" y="650" width="20" height="29" fill="url(#chk)"/><rect x="682.5" y="685.5" width="23" height="32" fill="url(#chk)" stroke="#000" stroke-width="1.400"/><g transform="translate(684,687)"><path d="M3.5 4.500 l2.500 2 M6.500 3.500 l0.500 2.500" stroke="#3a2222" stroke-width="1"/><circle cx="8.500" cy="8.500" r="2.400" fill="#d62a44"/><circle cx="10.500" cy="10" r="2.300" fill="#c4203a"/><circle cx="8.500" cy="11.500" r="2.600" fill="#dc3c56"/><circle cx="10.500" cy="13" r="1.800" fill="#c8283c"/><path d="M5 6 C8 10 12 16 17 25" stroke="#7a5a58" stroke-width="0.800" fill="none"/><path d="M12.500 16 l1.500 1.500 M14 19 l2 1 M15.500 22 l1.500 1.500" stroke="#5a2028" stroke-width="1.400"/><circle cx="16" cy="23.500" r="0.900" fill="#fff"/></g><g transform="translate(640,733)"><path d="M1 6 C4 1.500 10 1.500 13 6 C10 9.500 4 9.500 1 6 Z" fill="#fff" stroke="#222" stroke-width="1"/><circle cx="7" cy="5.500" r="2.800" fill="#111"/><path d="M1 4.500 C4 0.500 10 0.500 13 4.500" fill="none" stroke="#222" stroke-width="1.200"/></g><rect x="682.5" y="722.5" width="23" height="32" fill="#fff" stroke="#000" stroke-width="1.400"/><rect x="682.5" y="759.5" width="23" height="32" fill="#e6e3e0" stroke="#000" stroke-width="1.400"/><g transform="translate(684,761)"><path d="M3.5 4.500 l2.500 2 M6.500 3.500 l0.500 2.500" stroke="#3a2222" stroke-width="1"/><circle cx="8.500" cy="8.500" r="2.400" fill="#d62a44"/><circle cx="10.500" cy="10" r="2.300" fill="#c4203a"/><circle cx="8.500" cy="11.500" r="2.600" fill="#dc3c56"/><circle cx="10.500" cy="13" r="1.800" fill="#c8283c"/><path d="M5 6 C8 10 12 16 17 25" stroke="#7a5a58" stroke-width="0.800" fill="none"/><path d="M12.500 16 l1.500 1.500 M14 19 l2 1 M15.500 22 l1.500 1.500" stroke="#5a2028" stroke-width="1.400"/><circle cx="16" cy="23.500" r="0.900" fill="#fff"/></g>
  <!-- brush in row1 -->
  <g transform="translate(661,656)"><path d="M13.500 1 L15 2.500 L9.500 9.500 L7.500 8 Z" fill="#ddd" stroke="#222" stroke-width="0.800"/><path d="M7.500 8 L9.500 10 C8 13 5 14 1.500 13 C4.500 12 5.500 10 7.500 8 Z" fill="#666" stroke="#222" stroke-width="0.500"/></g>
  <!-- lock icons -->
  <g transform="translate(675,627)"><rect x="0.500" y="0.500" width="10" height="10" fill="#fff" stroke="#555"/><rect x="1" y="1" width="3" height="3" fill="#bbb"/><rect x="7" y="1" width="3" height="3" fill="#bbb"/><rect x="4" y="4" width="3" height="3" fill="#bbb"/><rect x="1" y="7" width="3" height="3" fill="#bbb"/><rect x="7" y="7" width="3" height="3" fill="#bbb"/></g>
  <g transform="translate(694,626)"><path d="M12.500 1 L7.500 7.500" stroke="#333" stroke-width="1.500"/><path d="M8 6.500 C5.500 7.500 5 10.500 1.500 11.500 C5.500 13 8.500 11.500 9.500 8 Z" fill="#777" stroke="#222" stroke-width="0.700"/></g>
  <g transform="translate(713,627)"><path d="M5.500 0.500 V11 M0.500 5.500 H11" stroke="#111" stroke-width="1.200"/><path d="M5.500 -0.500 l-2 2.500 h4 z M5.500 12 l-2 -2.500 h4 z M-0.500 5.500 l2.500 -2 v4 z M11.500 5.500 l-2.500 -2 v4 z" fill="#111"/></g>
  <g transform="translate(733,627)"><path d="M2 5 V3.500 A2.500 2.500 0 0 1 7 3.500 V5" fill="none" stroke="#222" stroke-width="1.400"/><rect x="0.500" y="5" width="8.500" height="6" fill="#333"/></g>
  <!-- bg lock -->
  <g transform="translate(814,769)"><path d="M2 5 V3.500 A2.500 2.500 0 0 1 7 3.500 V5" fill="none" stroke="#222" stroke-width="1.200"/><rect x="0.500" y="5" width="8.500" height="6" fill="#f4f4f4" stroke="#222"/><path d="M3 8 H6.500" stroke="#222"/></g>
  <!-- bottom icons -->
  <g transform="translate(664,850)"><circle cx="5.500" cy="5.500" r="5" fill="#222"/><text x="3" y="9" font-family="Liberation Serif,serif" font-style="italic" font-weight="bold" font-size="9" fill="#fff">f</text><path d="M11 9 h3 l-1.500 2 z" fill="#000"/></g>
  <g transform="translate(691,849)"><rect x="0.500" y="0.500" width="13" height="12" fill="#999" stroke="#222"/><circle cx="7" cy="6.500" r="3.800" fill="#fff" stroke="#444" stroke-width="0.600"/></g>
  <g transform="translate(720,851)"><path d="M0.500 9.500 V1.500 H4 L5 2.500 H10.500 V9.500 Z" fill="#e6e6e6" stroke="#666"/></g>
  <g transform="translate(748,850)"><circle cx="5.500" cy="5.500" r="5" fill="#fff" stroke="#222"/><path d="M9 2 A5 5 0 0 1 2 9 Z" fill="#222"/><path d="M12 9 h3 l-1.500 2 z" fill="#000"/></g>
  <g transform="translate(780,851)"><path d="M0.500 9.500 V3.500 L3.500 0.500 H8.500 V9.500 Z" fill="#fff" stroke="#444"/><rect x="1" y="5" width="4" height="4" fill="#444"/></g>
  <g transform="translate(808,849)"><path d="M1.500 4 H9.500 L8.800 11.500 H2.200 Z" fill="#f2f2f2" stroke="#333"/><path d="M0.500 3.500 H10.500" stroke="#222" stroke-width="1.500"/><path d="M3.500 2.500 Q5.500 -0.500 7.500 2.500" stroke="#222" fill="none"/><path d="M3.800 5.500 V10 M5.500 5.500 V10 M7.200 5.500 V10" stroke="#555" stroke-width="0.800"/></g>
  <g fill="#aca899"><rect x="837" y="859" width="2" height="2"/><rect x="833" y="859" width="2" height="2"/><rect x="837" y="855" width="2" height="2"/><rect x="829" y="859" width="2" height="2"/><rect x="833" y="855" width="2" height="2"/><rect x="837" y="851" width="2" height="2"/></g>
</svg>

<!-- fill dialog -->
<div class="win" id="fill" style="left:460px;top:198px;width:318px;height:259px;border-radius:8px 8px 0 0">
  <div class="wtitle" style="height:29px;border-radius:8px 8px 0 0"></div>
  <div class="abs" style="left:7px;top:9px;color:#fff;font-weight:bold;font-size:13px;font-family:'Liberation Sans','Noto Sans CJK SC',sans-serif;text-shadow:1px 1px 0 #0a2a8a;white-space:pre">填充</div>
  <div class="xb xc" style="left:292px;top:6px"><svg class="abs" style="left:3px;top:3px" width="13" height="13" viewBox="0 0 13 13"><path d="M1.500 1.500 L11.500 11.500 M11.500 1.500 L1.500 11.500" stroke="#fff" stroke-width="2.200"/></svg></div>
  <div class="pbody" style="left:3px;top:29px;width:312px;height:226px">
    <!-- coordinates inside pbody: page x-463, y-227 -->
    <div class="grp" style="left:11px;top:18px;width:192px;height:80px"></div>
    <div class="glab" style="left:24px;top:13px">内容</div>
    <div class="grp" style="left:11px;top:117px;width:192px;height:97px"></div>
    <div class="glab" style="left:24px;top:112px">混合</div>
    <div class="dl" style="right:219px;top:38px">使用(<u>U</u>):</div>
    <div class="combo" style="left:97px;top:32px;width:98px"><span>50% 灰色</span><b></b></div>
    <div class="dl" style="right:165px;top:70px;color:#aca899">自定图案:</div>
    <div class="abs" style="left:155px;top:62px;width:39px;height:28px;border:1px solid #000"><div class="abs" style="left:26px;top:0;width:1px;height:26px;background:#000"></div><div class="abs" style="left:29px;top:12px;border:3px solid transparent;border-top:3px solid #aca899;border-bottom:0"></div></div>
    <div class="dl" style="right:219px;top:137px">模式(<u>M</u>):</div>
    <div class="combo" style="left:97px;top:131px;width:92px"><span>正常</span><b></b></div>
    <div class="dl" style="right:219px;top:167px">不透明度(<u>O</u>):</div>
    <div class="abs" style="left:97px;top:163px;width:48px;height:22px;border:1px solid #7f9db9;background:#fff"><div class="abs" style="left:2px;top:3px;width:16px;height:14px;background:#1a3a95;color:#fff;font-size:12.500px;line-height:14px;padding-left:1px">70</div></div>
    <div class="abs" style="left:147px;top:167px;font-size:12.500px">%</div>
    <div class="abs" style="left:20px;top:194px;width:13px;height:13px;border:1px solid #1c5180;background:linear-gradient(135deg,#dcdcd7,#fff)"></div>
    <div class="abs" style="left:35px;top:195px;font-size:12px;white-space:pre">保留透明区域(<u>P</u>)</div>
    <div class="btn" style="left:221px;top:17px;box-shadow:inset 0 0 0 1px #cfe0fb, inset 0 0 0 2px #a4c0f0, inset 0 -2px 0 0 #7c9fe4">好</div>
    <div class="btn" style="left:221px;top:45px">取消</div>
  </div>
</div>
</body>
</html>
